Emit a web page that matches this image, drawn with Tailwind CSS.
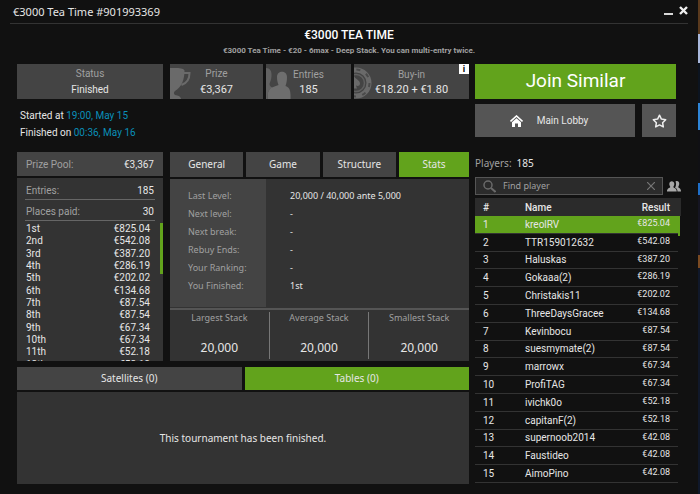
<!DOCTYPE html>
<html lang="en">

<head>
    <meta charset="UTF-8">
    <meta name="viewport" content="width=device-width, initial-scale=1.0">
    <title>€3000 Tea Time #901993369</title>
    <script src="https://cdn.jsdelivr.net/npm/@tailwindcss/browser@4"></script>
</head>

<body class="bg-[#111111] min-h-screen flex font-['Roboto',sans-serif] text-[#e6e6e6]">
    <div class="flex-1 min-w-0 px-[10px]">
        <!-- Title bar -->
        <header class="flex items-center justify-between h-6 border-b border-[#333333]">
            <h1 class="pl-[3px] text-[11px] leading-4 font-['Noto_Sans',sans-serif]">€3000 Tea Time #901993369</h1>
            <div class="flex items-center gap-[6px]">
                <button aria-label="Minimize" class="h-4 flex items-center">
                    <svg class="w-[9px] h-4" viewBox="0 0 9 16"><path d="M0 9h9v2H0z" fill="#d8d8d8" /></svg>
                </button>
                <button aria-label="Close" class="h-4 flex items-center">
                    <svg class="w-[9px] h-4" viewBox="0 0 9 16"><path d="M1 3l7 7M8 3l-7 7" stroke="#eeeeee" stroke-width="2.4" /></svg>
                </button>
            </div>
        </header>

        <div class="text-center">
            <h2 class="pt-px text-[12px] leading-5 font-medium text-white">€3000 TEA TIME</h2>
            <p class="text-[8px] leading-3 font-bold text-[#a0a0a0]">€3000 Tea Time - €20 - 6max - Deep Stack. You can multi-entry twice.</p>
        </div>

        <div class="flex gap-[6px] px-[7px] pt-[7px]">
            <!-- Left part -->
            <main class="flex-1 min-w-0">
                <!-- Summary boxes -->
                <div class="flex gap-[3px] h-[35px] text-center">
                    <div class="w-[146px] mr-1 bg-[#444444]">
                        <div class="pt-[2px] text-[10px] leading-4 text-[#a0a0a0]">Status</div>
                        <div class="text-[10px] leading-4">Finished</div>
                    </div>
                    <div class="relative w-[93px] bg-[#444444]">
                        <svg class="absolute left-0 bottom-0 w-[21px] h-8" viewBox="0 0 21 32" fill="none">
                            <path d="M0 1h7c4 0 7 1 7.500 2.500C14.500 12 12 20 5 24c-1.500 1-1.500 3 0 4 3 .5 6 1.500 6 4H0z" fill="#6a6a6a" />
                            <path d="M14 6h5.500c0 6-2 10-8 12" stroke="#6a6a6a" stroke-width="2" />
                        </svg>
                        <div class="pt-[2px] text-[10px] leading-4 text-[#a0a0a0]">Prize</div>
                        <div class="text-[11px] leading-4">€3,367</div>
                    </div>
                    <div class="relative w-[85px] bg-[#444444]">
                        <svg class="absolute left-0 bottom-0 w-[25px] h-8" viewBox="0 0 25 32">
                            <path d="M0 1c4 0 6 3 5.500 8-.2 4-1.500 6-2 8 .3 2 1 3 3 3.500C3 22 1.500 25 1 32H0z" fill="#626262" />
                            <path d="M11 10c0-7 10-7 10 0 0 4-.6 6-1.500 9 3.500 1 5 4 5 9v4H1.500v-2c0-5 1.500-9 7-10.500l4-1.500c-1-2.500-1.500-5-1.500-8z" fill="#6e6e6e" />
                        </svg>
                        <div class="pt-[3px] text-[10px] leading-4 text-[#a0a0a0]">Entries</div>
                        <div class="text-[11px] leading-4 -mt-px">185</div>
                    </div>
                    <div class="relative flex-1 bg-[#444444]">
                        <svg class="absolute left-0 bottom-0 w-[19px] h-8" viewBox="0 0 19 32" fill="none">
                            <circle cx="2" cy="16" r="13" stroke="#6a6a6a" stroke-width="5" />
                            <circle cx="2" cy="16" r="13.500" stroke="#4a4a4a" stroke-width="2" stroke-dasharray="4 6.600" />
                            <circle cx="2" cy="16" r="8.500" stroke="#606060" stroke-width="1.500" />
                            <path d="M0 9c1 3 6 4 6 7.500 0 2.500-2.500 3-4 2l1 3H0z" fill="#6a6a6a" />
                        </svg>
                        <button class="absolute right-0 top-0 w-[10px] h-[10px] bg-white text-black text-[9px] leading-[10px] font-bold">i</button>
                        <div class="pt-[3px] text-[10px] leading-4 text-[#a0a0a0]">Buy-in</div>
                        <div class="text-[11px] leading-4 -mt-px">€18.20 + €1.80</div>
                    </div>
                </div>

                <div class="h-[53px] pl-[3px] pt-2 text-[10px] leading-[17px]">
                    <div>Started at <span class="text-[#0a8fb8]">19:00, May 15</span></div>
                    <div>Finished on <span class="text-[#0a8fb8]">00:36, May 16</span></div>
                </div>

                <div class="flex gap-[7px]">
                    <!-- Prize list -->
                    <section class="w-[146px] flex flex-col gap-[2px]">
                        <div class="h-6 bg-[#444444] flex items-center justify-between px-[9px] text-[10px]">
                            <span class="text-[#a0a0a0]">Prize Pool:</span><span>€3,367</span>
                        </div>
                        <div class="h-[183px] bg-[#333333] text-[10px] overflow-hidden">
                            <div class="mx-2 h-[22px] pt-1 px-px flex items-center justify-between border-b border-[#666666]">
                                <span class="text-[#a0a0a0]">Entries:</span><span>185</span>
                            </div>
                            <div class="mx-2 h-[21px] pt-[2px] px-px flex items-center justify-between border-b border-[#666666]">
                                <span class="text-[#a0a0a0]">Places paid:</span><span>30</span>
                            </div>
                            <div class="flex justify-between pl-[9px] pt-[2px]">
                                <table class="flex-1 h-[148px] leading-3">
                                    <tbody id="prizes"></tbody>
                                </table>
                                <div class="w-[3px] h-[51px] ml-[10px] bg-[#62a31c]"></div>
                            </div>
                        </div>
                    </section>

                    <!-- Stats -->
                    <section class="flex-1 min-w-0 flex flex-col gap-[2px] font-['Noto_Sans',sans-serif]">
                        <div class="flex gap-[3px] h-[25px] text-[10px]">
                            <button class="flex-1 bg-[#444444]">General</button>
                            <button class="flex-1 bg-[#444444]">Game</button>
                            <button class="flex-1 bg-[#444444]">Structure</button>
                            <button class="w-[70px] bg-[#62a31c]">Stats</button>
                        </div>
                        <div class="h-[182px] bg-[#333333]">
                            <dl class="grid grid-cols-[96px_1fr] h-[128px] text-[9px] leading-[18px]">
                                <div class="bg-[#444444] pt-2 pl-[18px] text-[#a0a0a0]">
                                    <dt>Last Level:</dt>
                                    <dt>Next level:</dt>
                                    <dt>Next break:</dt>
                                    <dt>Rebuy Ends:</dt>
                                    <dt>Your Ranking:</dt>
                                    <dt>You Finished:</dt>
                                </div>
                                <div class="pt-2 pl-6">
                                    <dd>20,000 / 40,000 ante 5,000</dd>
                                    <dd>-</dd>
                                    <dd>-</dd>
                                    <dd>-</dd>
                                    <dd>-</dd>
                                    <dd>1st</dd>
                                </div>
                            </dl>
                            <div class="mt-px pt-[2px] border-t-2 border-[#555555] grid grid-cols-3 text-center divide-x divide-[#777777]">
                                <div class="h-[47px]">
                                    <div class="text-[9px] leading-3 text-[#a0a0a0]">Largest Stack</div>
                                    <div class="pt-[14px] text-[12px] leading-5">20,000</div>
                                </div>
                                <div class="h-[47px]">
                                    <div class="text-[9px] leading-3 text-[#a0a0a0]">Average Stack</div>
                                    <div class="pt-[14px] text-[12px] leading-5">20,000</div>
                                </div>
                                <div class="h-[47px]">
                                    <div class="text-[9px] leading-3 text-[#a0a0a0]">Smallest Stack</div>
                                    <div class="pt-[14px] text-[12px] leading-5">20,000</div>
                                </div>
                            </div>
                        </div>
                    </section>
                </div>

                <!-- Satellites and tables -->
                <section class="pt-[6px] font-['Noto_Sans',sans-serif] text-[10px]">
                    <div class="flex gap-[3px] h-[23px]">
                        <button class="flex-1 bg-[#444444]">Satellites (0)</button>
                        <button class="flex-1 bg-[#62a31c]">Tables (0)</button>
                    </div>
                    <div class="mt-[2px] h-[92px] bg-[#333333] flex items-center justify-center">This tournament has been finished.</div>
                </section>
            </main>

            <!-- Players -->
            <aside class="w-[206px]">
                <div class="pr-[5px]">
                    <button class="block w-full h-[35px] bg-[#62a31c] text-white text-[19px]">Join Similar</button>
                    <div class="flex gap-[7px] pt-[5px] h-[38px]">
                        <button class="flex-1 pr-3 bg-[#555555] flex items-center justify-center gap-[14px] text-[10px]">
                            <svg class="w-[13px] h-3" viewBox="0 0 13 12" fill="none">
                                <path d="M0.5 6.5l6-5.5 6 5.5" stroke="#ffffff" stroke-width="1.6" />
                                <path d="M2 7.2l4.500-4 4.500 4V12H8V8.500H5V12H2z" fill="#ffffff" />
                            </svg>
                            Main Lobby
                        </button>
                        <button aria-label="Favourite" class="w-[34px] bg-[#555555] flex items-center justify-center">
                            <svg class="w-[15px] h-[14px]" viewBox="0 0 15 14" fill="none">
                                <path d="M7.500 1.200l1.900 3.900 4.300.6-3.100 3 .7 4.200-3.800-2-3.800 2 .7-4.200-3.100-3 4.300-.6z" stroke="#eeeeee" stroke-width="1.500" stroke-linejoin="round" />
                            </svg>
                        </button>
                    </div>
                </div>
                <div class="flex items-baseline gap-[5px] pt-[18px] text-[10px] leading-4 font-['Noto_Sans',sans-serif]">
                    <span class="text-[#a0a0a0]">Players:</span>
                    <span>185</span>
                </div>
                <div class="flex items-center justify-between pt-[6px]">
                    <label class="w-[188px] h-[18px] flex items-center border border-[#555555] bg-[#2b2b2b] px-[7px]">
                        <svg class="w-[13px] h-[13px]" viewBox="0 0 13 13" fill="none" stroke="#6a6a6a">
                            <circle cx="5" cy="5" r="4" stroke-width="1.500" />
                            <path d="M8 8l4.500 4" stroke-width="2" />
                        </svg>
                        <input type="text" aria-label="Find player" placeholder="Find player" class="flex-1 min-w-0 ml-[7px] text-[9px] font-['Noto_Sans',sans-serif] placeholder:text-[#a0a0a0] outline-none">
                        <svg class="w-2 h-2" viewBox="0 0 8 8"><path d="M0 0l8 8M8 0l-8 8" stroke="#777777" stroke-width="1.200" /></svg>
                    </label>
                    <svg class="w-[14px] h-[11px]" viewBox="0 0 14 11" fill="#a8a8a8">
                        <path d="M8.500 0.500c2-1 4 0 3.700 2.600-.1 1.500-.7 2.200-1 3 .2 1 2.800 1 2.800 4.400h-3.500c0-2-1-3-2.500-3.700 1-1.300 1.500-4.300.5-6.300z" />
                        <path d="M2.300 3C2.300-.8 7.300-.8 7.300 3c0 1.500-.8 2.300-1 3.100.2 1 3.400 1 3.400 4.400H0c0-3.400 3-3.400 3.300-4.400-.2-.8-1-1.600-1-3.100z" />
                    </svg>
                </div>
                <div class="flex mt-[3px]">
                    <table class="flex-1 h-[285px] text-[10px]">
                        <thead class="bg-[#2b2b2b]">
                            <tr class="h-[18px]">
                                <th class="w-[50px] pl-2 text-left font-medium">#</th>
                                <th class="text-left font-medium">Name</th>
                                <th class="pr-2 text-right font-medium">Result</th>
                            </tr>
                        </thead>
                        <tbody id="players"></tbody>
                    </table>
                    <div class="w-[3px]">
                        <div class="h-[18px] bg-[#2b2b2b]"></div>
                        <div class="w-[2px] h-5 bg-[#62a31c]"></div>
                    </div>
                </div>
            </aside>
        </div>
    </div>

    <!-- Desktop behind the window -->
    <div class="w-[2px] flex flex-col">
        <div class="h-[34px] bg-[#5a3a1e]"></div>
        <div class="h-[29px] bg-[#a9b8dc]"></div>
        <div class="h-10 bg-[#0c1420]"></div>
        <div class="h-[27px] bg-[#2f86d8]"></div>
        <div class="h-[53px] bg-[#101014]"></div>
        <div class="h-3 bg-[#1f6fc8]"></div>
        <div class="h-[60px] bg-[#151522]"></div>
        <div class="h-[13px] bg-[#7a4a22]"></div>
        <div class="flex-1 bg-[#10182a]"></div>
    </div>

    <script>
        const prizes = ['825.04', '542.08', '387.20', '286.19', '202.02', '134.68', '87.54', '87.54', '67.34', '67.34', '52.18', '52.18', '42.08', '42.08', '42.08'];
        const names = ['kreolRV', 'TTR159012632', 'Haluskas', 'Gokaaa(2)', 'Christakis11', 'ThreeDaysGracee', 'Kevinbocu', 'suesmymate(2)', 'marrowx', 'ProfiTAG', 'ivichk0o', 'capitanF(2)', 'supernoob2014', 'Faustideo', 'AimoPino'];
        const suffix = ['st', 'nd', 'rd'];

        document.getElementById('prizes').innerHTML = prizes.slice(0, 12).map((p, i) =>
            `<tr><td>${i + 1}${suffix[i] || 'th'}</td><td class="text-right">€${p}</td></tr>`).join('');

        document.getElementById('players').innerHTML = names.map((n, i) =>
            `<tr class="border-b border-[#333333] ${i === 0 ? 'bg-[#62a31c]' : ''}">
                <td class="pl-2">${i + 1}</td><td>${n}</td><td class="pr-2 pb-px text-right text-[9px]">€${prizes[i]}</td>
            </tr>`).join('');
    </script>
</body>

</html>
